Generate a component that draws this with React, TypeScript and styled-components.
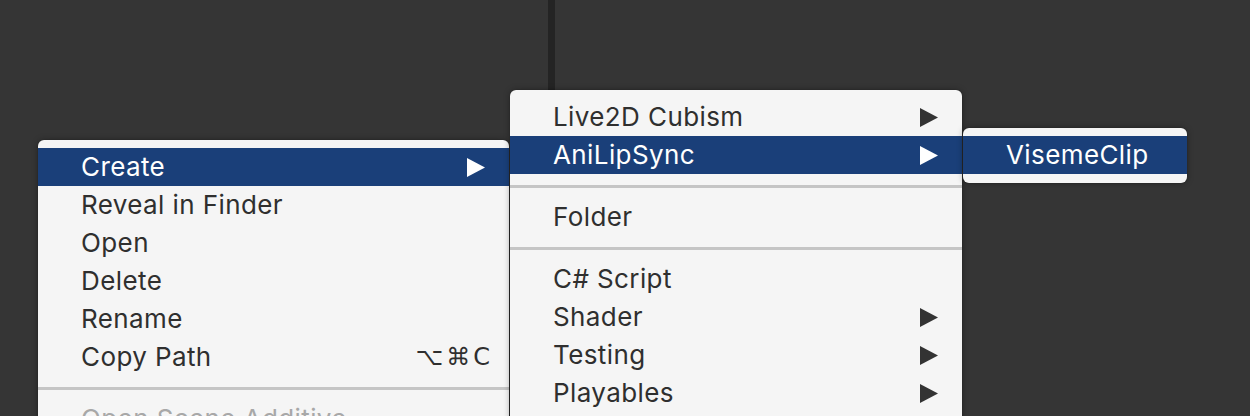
import styled, { createGlobalStyle } from 'styled-components';

const GlobalStyle = createGlobalStyle`
   html, body {
      margin: 0;
      padding: 0;
      background: #353535;
      overflow: hidden;
   }
   * {
      box-sizing: border-box;
   }
`;

const Workspace = styled.div`
   position: relative;
   display: flex;
   width: 1250px;
   height: 416px;
   overflow: hidden;
   background: #353535;
   font-family: Inter, 'Noto Sans', 'DejaVu Sans', sans-serif;
`;

const Pane = styled.div<{ $width?: number }>`
   flex: ${(p) => (p.$width ? `0 0 ${p.$width}px` : '1')};
   background: #353535;
`;

const Divider = styled.div`
   flex: 0 0 7px;
   background: #242424;
`;

const Menu = styled.div<{ $left: number; $top: number; $width: number; $z: number }>`
   position: absolute;
   left: ${(p) => p.$left}px;
   top: ${(p) => p.$top}px;
   width: ${(p) => p.$width}px;
   z-index: ${(p) => p.$z};
   display: flex;
   flex-direction: column;
   padding: 8px 0 9px;
   background: #f5f5f5;
   border-radius: 6px;
   box-shadow: 0 0 6px rgba(0, 0, 0, 0.35), 0 0 1px rgba(0, 0, 0, 0.4);
`;

const Row = styled.div<{ $active?: boolean; $disabled?: boolean }>`
   display: flex;
   align-items: center;
   height: 38px;
   padding: 0 24px 0 43px;
   font-size: 26px;
   letter-spacing: 0.4px;
   color: ${(p) => (p.$active ? '#ffffff' : p.$disabled ? '#a8a8a8' : '#2f2f2f')};
   background: ${(p) => (p.$active ? '#1a3f79' : 'transparent')};
`;

const Label = styled.span`
   flex: 1;
   white-space: nowrap;
   margin-top: -1px;
`;

const Shortcut = styled.span`
   font-family: 'DejaVu Sans', Inter, sans-serif;
   font-size: 24px;
   letter-spacing: 3px;
   color: #2f2f2f;
   margin-right: -8px;
`;

const Separator = styled.div`
   height: 3px;
   margin: 11px 0 10px;
   background: #c5c5c5;
`;

// tail of a menu that runs on below the window edge
const Overflow = styled.div`
   height: 60px;
`;

const Arrow = ({ active }: { active?: boolean }) => (
   <svg width="18" height="19" viewBox="0 0 18 19">
      <polygon points="0,0 18,9.5 0,19" fill={active ? '#ffffff' : '#333333'} />
   </svg>
);

type Item = { label: string; arrow?: boolean; shortcut?: string; active?: boolean; disabled?: boolean } | 'sep';

const projectMenu: Item[] = [
   { label: 'Create', arrow: true, active: true },
   { label: 'Reveal in Finder' },
   { label: 'Open' },
   { label: 'Delete' },
   { label: 'Rename' },
   { label: 'Copy Path', shortcut: '⌥⌘C' },
   'sep',
   { label: 'Open Scene Additive', disabled: true },
];

const createMenu: Item[] = [
   { label: 'Live2D Cubism', arrow: true },
   { label: 'AniLipSync', arrow: true, active: true },
   'sep',
   { label: 'Folder' },
   'sep',
   { label: 'C# Script' },
   { label: 'Shader', arrow: true },
   { label: 'Testing', arrow: true },
   { label: 'Playables', arrow: true },
];

const lipSyncMenu: Item[] = [{ label: 'VisemeClip', active: true }];

const renderItems = (items: Item[]) =>
   items.map((item, i) =>
      item === 'sep' ? (
         <Separator key={i} />
      ) : (
         <Row key={i} $active={item.active} $disabled={item.disabled}>
            <Label>{item.label}</Label>
            {item.shortcut && <Shortcut>{item.shortcut}</Shortcut>}
            {item.arrow && <Arrow active={item.active} />}
         </Row>
      ),
   );

const App = () => {
   return (
      <>
         <GlobalStyle />
         <Workspace>
            <Pane $width={548} />
            <Divider />
            <Pane />

            <Menu $left={38} $top={140} $width={471} $z={1}>
               {renderItems(projectMenu)}
            </Menu>
            <Menu $left={510} $top={90} $width={452} $z={2}>
               {renderItems(createMenu)}
               <Overflow />
            </Menu>
            <Menu $left={963} $top={128} $width={224} $z={3}>
               {renderItems(lipSyncMenu)}
            </Menu>
         </Workspace>
      </>
   );
};

export default App;
